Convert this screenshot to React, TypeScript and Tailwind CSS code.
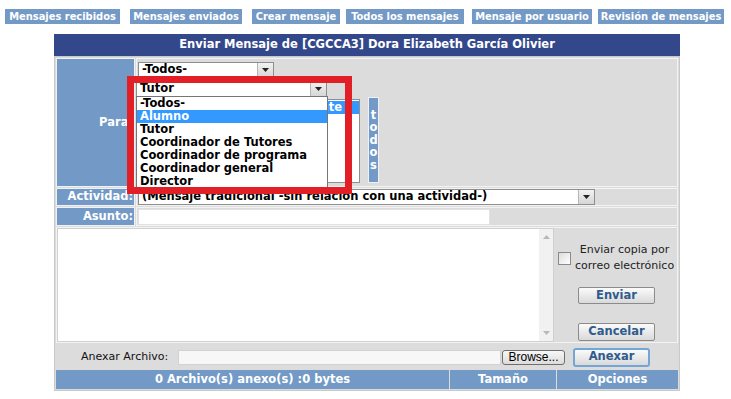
import React from "react"

const verdana = { fontFamily: '"DejaVu Sans", Verdana, sans-serif' }
const tahoma = { fontFamily: '"DejaVu Sans Condensed", "DejaVu Sans", Tahoma, sans-serif' }

const navItems = [
  { label: "Mensajes recibidos", ml: "ml-[5px]", w: "w-[115px]" },
  { label: "Mensajes enviados", ml: "ml-[10px]", w: "w-[112px]" },
  { label: "Crear mensaje", ml: "ml-[10px]", w: "w-[88px]" },
  { label: "Todos los mensajes", ml: "ml-[6px]", w: "w-[118px]" },
  { label: "Mensaje por usuario", ml: "ml-[8px]", w: "w-[120px]" },
  { label: "Revisión de mensajes", ml: "ml-[6px]", w: "w-[126px]" },
]

const roles = [
  "-Todos-",
  "Alumno",
  "Tutor",
  "Coordinador de Tutores",
  "Coordinador de programa",
  "Coordinador general",
  "Director",
]

const Arrow = () => (
  <div className="w-[16px] h-full bg-gradient-to-b from-[#f2f2f2] to-[#d6d6d6] border-l border-[#b5b5b5] flex items-center justify-center">
    <svg width="7" height="4" viewBox="0 0 7 4">
      <path d="M0 0h7L3.5 4z" fill="#222" />
    </svg>
  </div>
)

const Label = ({ text }: { text: string }) => (
  <div className="w-[79px] shrink-0 bg-[#7399c6] border border-[#eef2f7] flex items-center justify-end pr-[1px] text-white font-bold text-[11.5px]">
    {text}
  </div>
)

const App = () => {
  return (
    <div className="relative w-[731px] h-[399px] bg-white overflow-hidden text-[11.5px]" style={verdana}>
      {/* top nav */}
      <div className="flex pt-[9px]">
        {navItems.map((n) => (
          <div
            key={n.label}
            className={`${n.ml} ${n.w} h-[15px] bg-[#7399c6] text-white font-bold text-[11px] leading-[15px] flex items-center justify-center whitespace-nowrap`}
            style={tahoma}
          >
            {n.label}
          </div>
        ))}
      </div>

      {/* main panel */}
      <div className="ml-[54px] mt-[10px] w-[626px]">
        <div className="h-[22px] bg-[#33488a] text-white font-bold text-[11.5px] flex items-center justify-center">
          Enviar Mensaje de [CGCCA3] Dora Elizabeth García Olivier
        </div>
        <div className="bg-[#dcdcdc] border border-[#c9c9c9] p-[1px] flex flex-col gap-[1px]">
          {/* Para row */}
          <div className="flex h-[129px] gap-[1px]">
            <Label text="Para:" />
            <div className="flex-1 border border-[#f3f3f3] pl-[1px] pt-[3px] flex flex-col">
              <div className="w-[136px] h-[16px] bg-white border border-[#8e8e8e] flex items-center">
                <span className="flex-1 pl-[3px] font-bold text-black">-Todos-</span>
                <Arrow />
              </div>
              <div className="flex mt-[21px]">
                <div className="w-[222px] h-[84px] bg-white border border-[#8e8e8e]">
                  <div className="h-[13px] mt-[1px] bg-[#3399ff] text-white font-bold flex justify-end pr-[17px] leading-[13px] whitespace-nowrap">
                    Participante
                  </div>
                </div>
                <div className="ml-[8px] -mt-[2px] w-[11px] h-[86px] bg-[#7399c6] border border-[#eef2f7] flex flex-col items-center justify-center text-white font-bold text-[11.5px] leading-[12.5px]">
                  {"todos".split("").map((c, i) => (
                    <span key={i}>{c}</span>
                  ))}
                </div>
              </div>
            </div>
          </div>

          {/* Actividad row */}
          <div className="flex h-[18px] gap-[1px]">
            <Label text="Actividad:" />
            <div className="flex-1 border border-[#f3f3f3] pl-[1px] flex items-center">
              <div className="w-[457px] h-[16px] bg-white border border-[#8e8e8e] flex items-center">
                <span className="flex-1 pl-[3px] font-bold text-black whitespace-nowrap">
                  (Mensaje tradicional -sin relación con una actividad-)
                </span>
                <Arrow />
              </div>
            </div>
          </div>

          {/* Asunto row */}
          <div className="flex h-[19px] gap-[1px]">
            <Label text="Asunto:" />
            <div className="flex-1 border border-[#f3f3f3] pl-[1px] flex items-center">
              <div className="w-[352px] h-[16px] bg-white border border-[#e2e2e2]" />
            </div>
          </div>

          {/* message row */}
          <div className="flex h-[116px] border border-[#f3f3f3]">
            <div className="w-[497px] h-full bg-white border border-[#d0d0d0] flex justify-end">
              <div className="w-[14px] h-full bg-[#f1f1f1] flex flex-col items-center justify-between py-[6px]">
                <svg width="7" height="4" viewBox="0 0 7 4">
                  <path d="M3.5 0L7 4H0z" fill="#b8b8b8" />
                </svg>
                <svg width="7" height="4" viewBox="0 0 7 4">
                  <path d="M0 0h7L3.5 4z" fill="#b8b8b8" />
                </svg>
              </div>
            </div>
            <div className="flex-1 flex flex-col pt-[14px] pl-[4px]">
              <div className="flex items-center gap-[4px]">
                <div className="w-[13px] h-[13px] border border-[#8a8a8a] bg-gradient-to-br from-[#dcdcdc] to-white" />
                <div className="text-[11px] text-[#222] leading-[16px] text-center whitespace-nowrap">
                  Enviar copia por
                  <br />
                  correo electrónico
                </div>
              </div>
              <button className="mt-[13px] ml-[20px] w-[77px] h-[17px] rounded-[2px] border border-[#8b8b8b] bg-gradient-to-b from-[#fbfbfb] to-[#d9d9d9] text-[#2f5b8d] font-bold text-[11.5px] leading-none">
                Enviar
              </button>
              <button className="mt-[19px] ml-[20px] w-[77px] h-[18px] rounded-[2px] border border-[#8b8b8b] bg-gradient-to-b from-[#fbfbfb] to-[#d9d9d9] text-[#2f5b8d] font-bold text-[11.5px] leading-none">
                Cancelar
              </button>
            </div>
          </div>

          {/* anexar row */}
          <div className="flex items-center h-[25px] pt-[1px]">
            <span className="ml-[25px] w-[97px] text-[#111] text-[11px] whitespace-nowrap">Anexar Archivo:</span>
            <div className="w-[323px] h-[15px] bg-[#f7f7f7] border border-[#d2d2d2]" />
            <button
              className="ml-[1px] w-[63px] h-[15px] rounded-[3px] border border-[#6f6f6f] bg-gradient-to-b from-[#f7f7f7] to-[#dcdcdc] text-[12px] leading-none text-black"
              style={{ fontFamily: '"Liberation Sans", Arial, sans-serif' }}
            >
              Browse...
            </button>
            <button className="ml-[8px] w-[77px] h-[19px] rounded-[3px] border-2 border-[#72a6d8] bg-gradient-to-b from-[#fbfbfb] to-[#d9d9d9] text-[#2f5b8d] font-bold text-[11.5px] leading-none">
              Anexar
            </button>
          </div>

          {/* footer */}
          <div className="flex h-[19px] gap-[1px] text-white font-bold text-[11.5px]">
            <div className="w-[393px] bg-[#7399c6] flex items-center justify-center">
              0 Archivo(s) anexo(s) :0 bytes
            </div>
            <div className="w-[106px] bg-[#7399c6] flex items-center justify-center">Tamaño</div>
            <div className="flex-1 bg-[#7399c6] flex items-center justify-center">Opciones</div>
          </div>
        </div>
      </div>

      {/* open select (Tutor) with its list */}
      <div className="absolute left-[136px] top-[81px] w-[191px] h-[16px] bg-white border border-[#8e8e8e] flex items-center">
        <span className="flex-1 pl-[3px] font-bold text-black">Tutor</span>
        <Arrow />
      </div>
      <div className="absolute left-[136px] top-[96px] w-[192px] h-[92px] bg-white border border-[#767676] flex flex-col">
        {roles.map((r) => (
          <div
            key={r}
            className={`h-[13px] leading-[13px] pl-[3px] font-bold whitespace-nowrap ${
              r === "Alumno" ? "bg-[#3399ff] text-white" : "text-black"
            }`}
          >
            {r}
          </div>
        ))}
      </div>

      {/* red highlight */}
      <div className="absolute left-[127px] top-[76px] w-[225px] h-[118px] border-[7px] border-[#e21f26]" />
    </div>
  )
}

export default App
